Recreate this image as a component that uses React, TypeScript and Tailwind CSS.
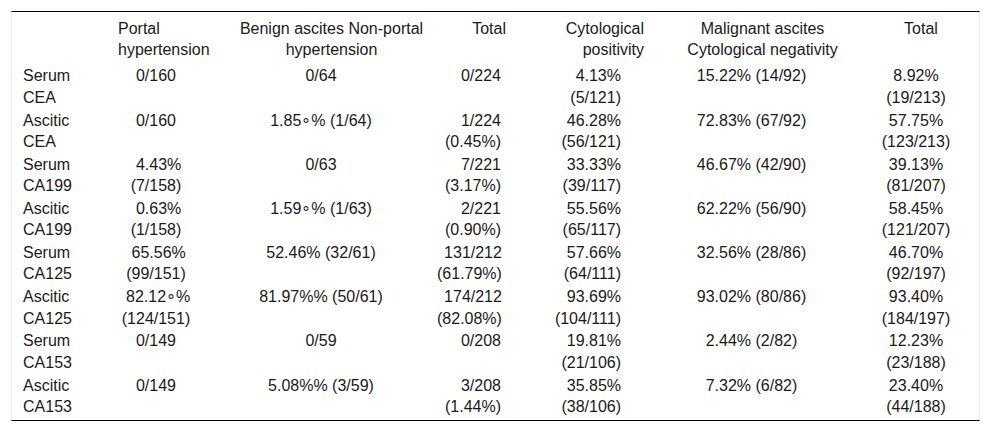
import React from "react";

type Row = {
  label: [string, string];
  portal: string[];
  nonPortal: string;
  benignTotal: string[];
  positive: string[];
  negative: string;
  malignantTotal: string[];
};

const rows: Row[] = [
  { label: ["Serum", "CEA"], portal: ["0/160"], nonPortal: "0/64", benignTotal: ["0/224"], positive: ["4.13%", "(5/121)"], negative: "15.22% (14/92)", malignantTotal: ["8.92%", "(19/213)"] },
  { label: ["Ascitic", "CEA"], portal: ["0/160"], nonPortal: "1.85\u2218% (1/64)", benignTotal: ["1/224", "(0.45%)"], positive: ["46.28%", "(56/121)"], negative: "72.83% (67/92)", malignantTotal: ["57.75%", "(123/213)"] },
  { label: ["Serum", "CA199"], portal: ["4.43%", "(7/158)"], nonPortal: "0/63", benignTotal: ["7/221", "(3.17%)"], positive: ["33.33%", "(39/117)"], negative: "46.67% (42/90)", malignantTotal: ["39.13%", "(81/207)"] },
  { label: ["Ascitic", "CA199"], portal: ["0.63%", "(1/158)"], nonPortal: "1.59\u2218% (1/63)", benignTotal: ["2/221", "(0.90%)"], positive: ["55.56%", "(65/117)"], negative: "62.22% (56/90)", malignantTotal: ["58.45%", "(121/207)"] },
  { label: ["Serum", "CA125"], portal: ["65.56%", "(99/151)"], nonPortal: "52.46% (32/61)", benignTotal: ["131/212", "(61.79%)"], positive: ["57.66%", "(64/111)"], negative: "32.56% (28/86)", malignantTotal: ["46.70%", "(92/197)"] },
  { label: ["Ascitic", "CA125"], portal: ["82.12\u2218%", "(124/151)"], nonPortal: "81.97%% (50/61)", benignTotal: ["174/212", "(82.08%)"], positive: ["93.69%", "(104/111)"], negative: "93.02% (80/86)", malignantTotal: ["93.40%", "(184/197)"] },
  { label: ["Serum", "CA153"], portal: ["0/149"], nonPortal: "0/59", benignTotal: ["0/208"], positive: ["19.81%", "(21/106)"], negative: "2.44% (2/82)", malignantTotal: ["12.23%", "(23/188)"] },
  { label: ["Ascitic", "CA153"], portal: ["0/149"], nonPortal: "5.08%% (3/59)", benignTotal: ["3/208", "(1.44%)"], positive: ["35.85%", "(38/106)"], negative: "7.32% (6/82)", malignantTotal: ["23.40%", "(44/188)"] },
];

// a value and its count, one under the other
function Lines({ lines, centered }: { lines: string[]; centered?: boolean }) {
  return (
    <span className={centered ? "inline-block text-center align-top" : "inline-block text-right align-top"}>
      {lines.map((l) => (
        <span key={l} className="block whitespace-nowrap">
          {l}
        </span>
      ))}
    </span>
  );
}

export default function App() {
  return (
    <div className="bg-white pl-[11px] pt-[11px] font-['Liberation_Sans',Arial,sans-serif] text-[16px] leading-[21.33px] text-[#1a1a1a]">
      <div className="w-[969px] border-x border-t border-b border-x-[#ececec] border-t-black border-b-black pb-[2px]">
        <table className="w-full table-fixed border-collapse">
          <colgroup>
            <col className="w-[99px]" />
            <col className="w-[115px]" />
            <col className="w-[211px]" />
            <col className="w-[79px]" />
            <col className="w-[140px]" />
            <col className="w-[205px]" />
            <col className="w-[120px]" />
          </colgroup>
          <thead>
            <tr className="align-top">
              <th className="pt-[6px] pb-[4px]" />
              <th className="pt-[6px] pb-[4px] pl-[7px] text-left font-normal">
                Portal
                <br />
                hypertension
              </th>
              <th className="pt-[6px] pb-[4px] text-center font-normal">
                Benign ascites Non-portal
                <br />
                hypertension
              </th>
              <th className="pt-[6px] pb-[4px] pr-[10px] text-right font-normal">Total</th>
              <th className="pt-[6px] pb-[4px] pr-[12px] text-right font-normal">
                Cytological
                <br />
                positivity
              </th>
              <th className="pt-[6px] pb-[4px] pl-[8px] text-center font-normal">
                Malignant ascites
                <br />
                Cytological negativity
              </th>
              <th className="pt-[6px] pb-[4px] text-center font-normal">Total</th>
            </tr>
          </thead>
          <tbody>
            {rows.map((r) => (
              <tr key={r.label.join(" ")} className="align-top">
                <td className="py-[0.75px] pl-[11px]">
                  {r.label[0]}
                  <br />
                  {r.label[1]}
                </td>
                <td className="py-[0.75px] pr-[25px] text-center">
                  <Lines lines={r.portal} />
                </td>
                <td className="py-[0.75px] pr-[21px] text-center whitespace-nowrap">{r.nonPortal}</td>
                <td className="py-[0.75px] pr-[15px] text-right">
                  <Lines lines={r.benignTotal} />
                </td>
                <td className="py-[0.75px] pr-[35px] text-right">
                  <Lines lines={r.positive} />
                </td>
                <td className="py-[0.75px] pr-[14px] text-center whitespace-nowrap">{r.negative}</td>
                <td className="py-[0.75px] pr-[10px] text-center">
                  <Lines lines={r.malignantTotal} centered />
                </td>
              </tr>
            ))}
          </tbody>
        </table>
      </div>
    </div>
  );
}
